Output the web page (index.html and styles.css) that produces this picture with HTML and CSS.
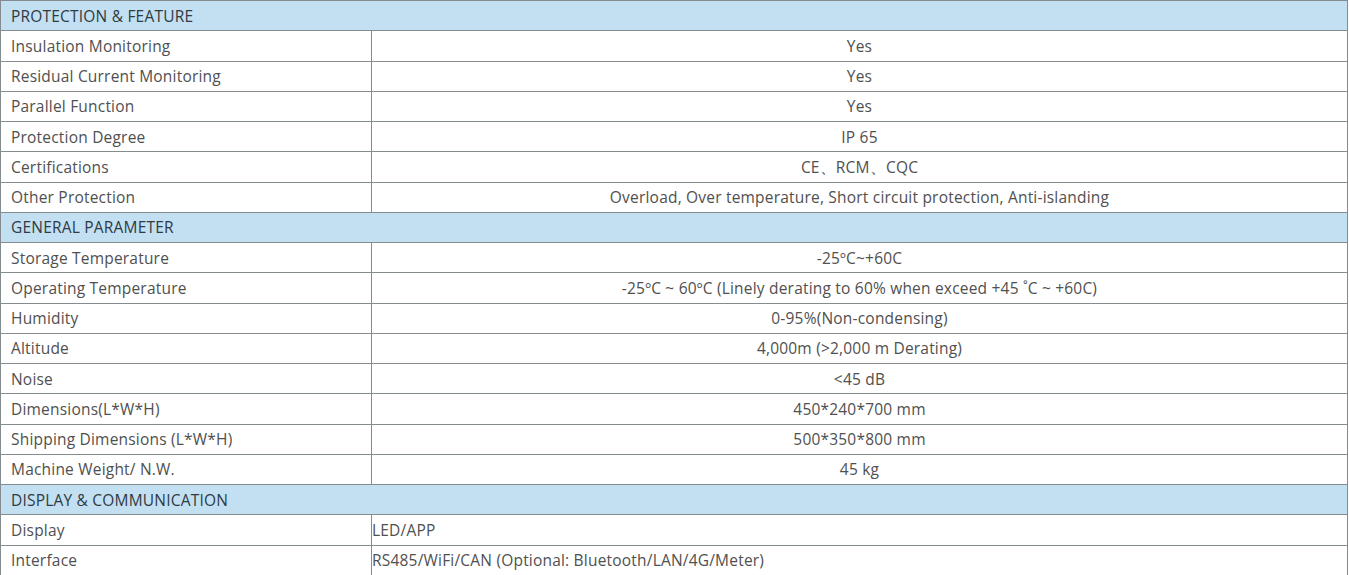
FILE: index.html
```html
<!DOCTYPE html>
<html>
<head>
<meta charset="utf-8">
<link rel="stylesheet" href="styles.css">
</head>
<body>
<table class="spec">
  <colgroup><col class="c-label"><col class="c-value"></colgroup>
  <tbody>
    <tr class="section"><td colspan="2">PROTECTION &amp; FEATURE</td></tr>
    <tr><td class="label">Insulation Monitoring</td><td class="value">Yes</td></tr>
    <tr><td class="label">Residual Current Monitoring</td><td class="value">Yes</td></tr>
    <tr><td class="label">Parallel Function</td><td class="value">Yes</td></tr>
    <tr><td class="label">Protection Degree</td><td class="value">IP 65</td></tr>
    <tr><td class="label">Certifications</td><td class="value">CE、RCM、CQC</td></tr>
    <tr><td class="label">Other Protection</td><td class="value">Overload, Over temperature, Short circuit protection, Anti-islanding</td></tr>
    <tr class="section"><td colspan="2">GENERAL PARAMETER</td></tr>
    <tr><td class="label">Storage Temperature</td><td class="value">-25ºC~+60C</td></tr>
    <tr><td class="label">Operating Temperature</td><td class="value">-25ºC ~ 60ºC (Linely derating to 60% when exceed +45 ˚C ~ +60C)</td></tr>
    <tr><td class="label">Humidity</td><td class="value">0-95%(Non-condensing)</td></tr>
    <tr><td class="label">Altitude</td><td class="value">4,000m (&gt;2,000 m Derating)</td></tr>
    <tr><td class="label">Noise</td><td class="value">&lt;45 dB</td></tr>
    <tr><td class="label">Dimensions(L*W*H)</td><td class="value">450*240*700 mm</td></tr>
    <tr><td class="label">Shipping Dimensions (L*W*H)</td><td class="value">500*350*800 mm</td></tr>
    <tr><td class="label">Machine Weight/ N.W.</td><td class="value">45 kg</td></tr>
    <tr class="section"><td colspan="2">DISPLAY &amp; COMMUNICATION</td></tr>
    <tr><td class="label">Display</td><td class="value left">LED/APP</td></tr>
    <tr><td class="label">Interface</td><td class="value left">RS485/WiFi/CAN (Optional: Bluetooth/LAN/4G/Meter)</td></tr>
  </tbody>
</table>
</body>
</html>
```

FILE: styles.css
```css
html, body {
  margin: 0;
  padding: 0;
  background: #ffffff;
}

.spec {
  border-collapse: collapse;
  width: 1348px;
  table-layout: fixed;
  font-family: "Open Sans", "Noto Sans", sans-serif;
  font-size: 15.5px;
  letter-spacing: 0.2px;
  color: #505050;
}

.c-label { width: 371px; }

.spec td {
  border: 1px solid #858c90;
  height: 30.25px;
  padding: 0 10px;
  box-sizing: border-box;
  vertical-align: middle;
  line-height: 18px;
  white-space: nowrap;
}

.section td {
  background: #c2e0f2;
  color: #2f3a42;
}

.value {
  text-align: center;
}

.value.left {
  text-align: left;
  padding-left: 0;
}
```
